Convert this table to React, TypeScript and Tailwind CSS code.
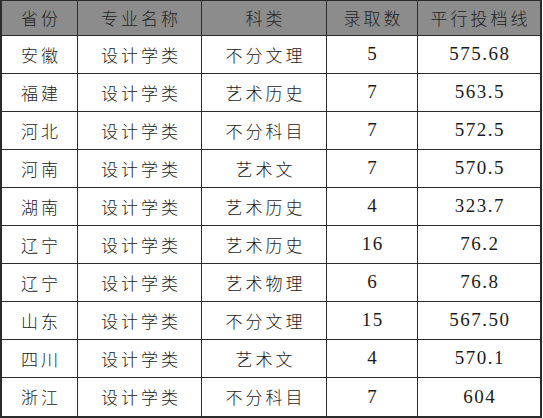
const headers = ['省份', '专业名称', '科类', '录取数', '平行投档线'];

const rows: string[][] = [
  ['安徽', '设计学类', '不分文理', '5', '575.68'],
  ['福建', '设计学类', '艺术历史', '7', '563.5'],
  ['河北', '设计学类', '不分科目', '7', '572.5'],
  ['河南', '设计学类', '艺术文', '7', '570.5'],
  ['湖南', '设计学类', '艺术历史', '4', '323.7'],
  ['辽宁', '设计学类', '艺术历史', '16', '76.2'],
  ['辽宁', '设计学类', '艺术物理', '6', '76.8'],
  ['山东', '设计学类', '不分文理', '15', '567.50'],
  ['四川', '设计学类', '艺术文', '4', '570.1'],
  ['浙江', '设计学类', '不分科目', '7', '604'],
];

const grid = 'grid grid-cols-[76px_124px_125px_91px_122px]';
const cjk = "font-['Noto_Sans_CJK_SC',sans-serif] font-light text-[17px] tracking-[3px] pl-[3px]";
const num = "font-['Liberation_Serif',serif] text-[19px] tracking-[1.5px] pl-[1.5px]";

export default function App() {
  return (
    <div className="w-[543px] h-[418px] bg-white">
      <div className="w-[542px] border-x-2 border-t border-b-2 border-[#2b2b2b] text-[#1c1c1c]">
        <div className={`${grid} h-[35px] bg-[#8c8c8c] text-[#222]`}>
          {headers.map((h, i) => (
            <div
              key={i}
              className={`flex items-center justify-center border-b border-[#2b2b2b] ${cjk} ${i < 4 ? 'border-r' : ''}`}
            >
              {h}
            </div>
          ))}
        </div>
        {rows.map((row, r) => (
          <div key={r} className={`${grid} h-[38px]`}>
            {row.map((cell, c) => (
              <div
                key={c}
                className={`flex items-center justify-center border-[#2b2b2b] ${c >= 3 ? num : cjk} ${c < 4 ? 'border-r' : ''} ${r < rows.length - 1 ? 'border-b' : ''}`}
              >
                {cell}
              </div>
            ))}
          </div>
        ))}
      </div>
    </div>
  );
}
